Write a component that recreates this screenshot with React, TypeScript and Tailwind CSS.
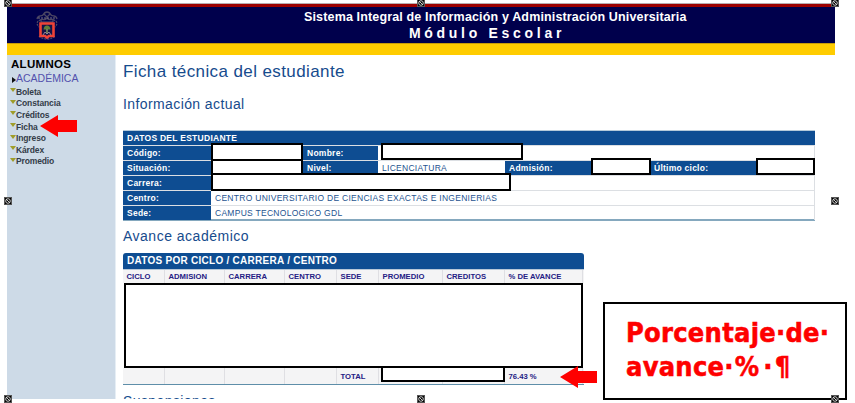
import React from "react";

const sans = "font-['Liberation_Sans',Arial,sans-serif]";

function Handle({ at }: { at: string }) {
  return (
    <svg className={`absolute h-[8px] w-[8px] ${at}`} viewBox="0 0 8 8">
      <rect width="8" height="8" fill="#555" />
      <rect x="1" y="1" width="6" height="6" fill="#000" />
      <circle cx="4" cy="4" r="2.300" fill="none" stroke="#ddd" strokeWidth="0.900" />
      <path d="M2 2L6 6" stroke="#ddd" strokeWidth="0.900" />
    </svg>
  );
}

function Arrow({ at }: { at: string }) {
  return (
    <svg className={`absolute h-[22px] w-[37px] ${at}`} viewBox="0 0 37 22">
      <path d="M0 11L18 0V5H37V17H18V22Z" fill="#fe0000" />
    </svg>
  );
}

function Redaction({ at }: { at: string }) {
  return <div className={`absolute border-2 border-black bg-white ${at}`} />;
}

function Crest() {
  return (
    <svg className="ml-[28px] mt-[4px] h-[29px] w-[24px]" viewBox="0 0 24 29">
      <g fill="none" stroke="#4c4663" strokeWidth="1.300">
        <path d="M2 8C3 3 6 6 8 4C10 0 14 0 16 4C18 6 21 3 22 8M4 10C7 6 9 11 12 7C15 11 18 6 20 10M9 3L12 6L15 3" />
        <path d="M3 10Q1 13 4 16M21 10Q23 13 20 16M4 25Q7 28 12 28Q17 28 20 25" strokeDasharray="2 1" />
      </g>
      <path d="M3 7H21" stroke="#777181" strokeDasharray="2 1" />
      <path d="M6 9V11H18V9" fill="none" stroke="#605970" />
      <path d="M5.500 12.500H18.500V25H14L12 26.500L10 25H5.500Z" fill="#151346" stroke="#ee4337" strokeWidth="2.600" />
      <path d="M8.500 18.500Q9 14.500 12 14.500Q15 14.500 15.500 18.500Z" fill="#5f7d3b" />
      <path d="M12 18V22" stroke="#80945b" strokeWidth="1.500" />
      <path d="M8 24L10 21L12 23L14 21L16 24" fill="none" stroke="#8d8296" />
    </svg>
  );
}

const menu = ["Boleta", "Constancia", "Créditos", "Ficha", "Ingreso", "Kárdex", "Promedio"];

function Label({ w, children }: { w: string; children: React.ReactNode }) {
  return (
    <div className={`h-[14px] shrink-0 bg-[#0e4d92] pl-[4px] text-[8.5px] font-bold leading-[14px] tracking-[0.25px] text-white ${w}`}>
      {children}
    </div>
  );
}

function Row({ children }: { children: React.ReactNode }) {
  return <div className="flex h-[15px] border-b border-[#dcdfe3]">{children}</div>;
}

const value = "pl-[4px] text-[8.5px] leading-[14px] tracking-[0.28px] text-[#24538f] whitespace-nowrap";

const columns: [string, string][] = [
  ["CICLO", "w-[42px]"],
  ["ADMISION", "w-[60px]"],
  ["CARRERA", "w-[60px]"],
  ["CENTRO", "w-[52px]"],
  ["SEDE", "w-[42px]"],
  ["PROMEDIO", "w-[64px]"],
  ["CREDITOS", "w-[62px]"],
  ["% DE AVANCE", "w-[78px]"],
];

const totals = ["", "", "", "", "TOTAL", "", "", "76.43 %"];

export default function App() {
  return (
    <div className={`relative h-[403px] w-[855px] overflow-hidden bg-white ${sans}`}>
      <div className="ml-[7px] flex h-[399px] w-[828px] flex-col overflow-hidden pt-[3px]">
        <div className="h-px shrink-0 bg-[#b8aeb0]" />
        <div className="h-[3px] shrink-0 bg-[#9d0000]" />
        <header className="flex h-[36px] shrink-0 bg-[#00004c] text-white">
          <Crest />
          <div className="ml-[245px] w-[383px] whitespace-nowrap pt-[2px] font-bold">
            <div className="text-[12.5px] leading-[16px] tracking-[0.15px]">Sistema Integral de Información y Administración Universitaria</div>
            <div className="ml-[105px] text-[14px] leading-[16px] tracking-[3.7px]">Módulo Escolar</div>
          </div>
        </header>
        <div className="h-[12px] shrink-0 border-t border-[#c99c09] bg-[#ffcc00]" />

        <div className="flex h-[344px] shrink-0">
          <aside className="w-[109px] shrink-0 border-r border-[#e6eef5] bg-[#cddae7]">
            <div className="pl-[4px] pt-[2px] text-[11.5px] font-bold leading-[14px] tracking-[0.3px] text-black">ALUMNOS</div>
            <div className="flex items-center pl-[5px] text-[10.5px] leading-[15px] text-[#5251ad]">
              <svg className="mt-[2px] h-[6px] w-[4px]" viewBox="0 0 4 6"><path d="M0 0L4 3L0 6Z" fill="#111" /></svg>
              ACADÉMICA
            </div>
            <nav>
              {menu.map((name) => (
                <div key={name} className="flex h-[11.6px] items-center pl-[3px]">
                  <svg className="mb-[3px] h-[4px] w-[6px]" viewBox="0 0 6 4"><path d="M0 0H6L3 4Z" fill="#a09d28" /></svg>
                  <span className="text-[8.5px] font-bold leading-[12px] tracking-[-0.13px] text-[#333c47]">{name}</span>
                </div>
              ))}
            </nav>
          </aside>

          <main className="w-[700px] shrink-0 pl-[7px] text-[#164b8d]">
            <h1 className="pt-[7px] text-[17px] leading-[20px] tracking-[0.4px]">Ficha técnica del estudiante</h1>
            <h2 className="pt-[13px] text-[14px] leading-[18px] tracking-[0.4px]">Información actual</h2>

            <section className="mt-[17px] h-[91px] w-[692px] border-b-2 border-t border-b-[#85a8be] border-t-[#b5cad9]">
              <div className="h-[14px] bg-[#0e4d92] pl-[4px] text-[8.5px] font-bold leading-[14px] tracking-[0.27px] text-white">DATOS DEL ESTUDIANTE</div>
              <div className="border-r border-t border-[#dcdfe3]">
                <Row>
                  <Label w="w-[88px]">Código:</Label>
                  <div className="w-[92px]" />
                  <Label w="w-[75px]">Nombre:</Label>
                </Row>
                <Row>
                  <Label w="w-[88px]">Situación:</Label>
                  <div className="w-[92px]" />
                  <Label w="w-[75px]">Nivel:</Label>
                  <div className={`w-[127px] ${value}`}>LICENCIATURA</div>
                  <Label w="w-[88px]">Admisión:</Label>
                  <div className="w-[57px]" />
                  <Label w="w-[107px]">Último ciclo:</Label>
                </Row>
                <Row><Label w="w-[88px]">Carrera:</Label></Row>
                <Row>
                  <Label w="w-[88px]">Centro:</Label>
                  <div className={value}>CENTRO UNIVERSITARIO DE CIENCIAS EXACTAS E INGENIERIAS</div>
                </Row>
                <div className="flex h-[14px]">
                  <Label w="w-[88px]">Sede:</Label>
                  <div className={value}>CAMPUS TECNOLOGICO GDL</div>
                </div>
              </div>
            </section>

            <h2 className="pt-[6px] text-[14px] leading-[18px] tracking-[0.5px]">Avance académico</h2>
            <section className="mt-[8px] w-[461px]">
              <div className="h-[16px] rounded-t-[3px] bg-[#0e4d92] pl-[4px] text-[10px] font-bold leading-[16px] tracking-[0.27px] text-white">DATOS POR CICLO / CARRERA / CENTRO</div>
              <div className="flex h-[14px] border-t border-[#b8c8d8] bg-[#f4f4f5]">
                {columns.map(([name, width]) => (
                  <div key={name} className={`shrink-0 border-r border-[#dfdfe3] pl-[3.5px] text-[7.7px] font-bold leading-[14px] text-[#242084] whitespace-nowrap ${width}`}>{name}</div>
                ))}
              </div>
              <div className="h-[85px]" />
              <div className="flex h-[17px] border-b border-[#5e8ea9] bg-[#f4f4f5]">
                {totals.map((text, i) => (
                  <div key={columns[i][0]} className={`shrink-0 border-r border-[#dfdfe3] pl-[3.5px] text-[7.7px] font-bold leading-[18px] text-[#242084] ${columns[i][1]}`}>{text}</div>
                ))}
              </div>
            </section>
            <h2 className="pt-[7px] text-[14px] leading-[18px] tracking-[0.4px]">Suspensiones</h2>
          </main>
        </div>
      </div>

      <Redaction at="left-[211px] top-[143px] h-[18px] w-[92px]" />
      <Redaction at="left-[381px] top-[143px] h-[17px] w-[142px]" />
      <Redaction at="left-[211px] top-[159px] h-[17px] w-[92px]" />
      <Redaction at="left-[591px] top-[158px] h-[17px] w-[60px]" />
      <Redaction at="left-[756px] top-[158px] h-[17px] w-[59px]" />
      <Redaction at="left-[211px] top-[173px] h-[18px] w-[300px]" />
      <Redaction at="left-[124px] top-[283px] h-[85px] w-[459px]" />
      <Redaction at="left-[381px] top-[366px] h-[16px] w-[124px]" />
      <Arrow at="left-[40px] top-[115px]" />
      <Arrow at="left-[560px] top-[366px]" />
      <div className="absolute left-[603px] top-[302px] h-[98px] w-[244px] whitespace-nowrap border-2 border-black bg-white pl-[21px] pt-[12px] text-[27px] font-bold leading-[34px] tracking-[0.25px] text-[#fe0000] [-webkit-text-stroke:0.5px_#fe0000] font-['DejaVu_Sans_Condensed','DejaVu_Sans',sans-serif]">
        <div>Porcentaje·de·</div>
        <div>avance·<span className="ml-px">%</span><span className="ml-[4px]">·</span><span className="ml-[2px]">¶</span></div>
      </div>

      <Handle at="left-[4px] top-[-1px]" />
      <Handle at="left-[417px] top-[-1px]" />
      <Handle at="left-[831px] top-[-1px]" />
      <Handle at="left-[4px] top-[197px]" />
      <Handle at="left-[831px] top-[197px]" />
      <Handle at="left-[4px] top-[395px]" />
      <Handle at="left-[417px] top-[395px]" />
      <Handle at="left-[831px] top-[395px]" />
    </div>
  );
}
